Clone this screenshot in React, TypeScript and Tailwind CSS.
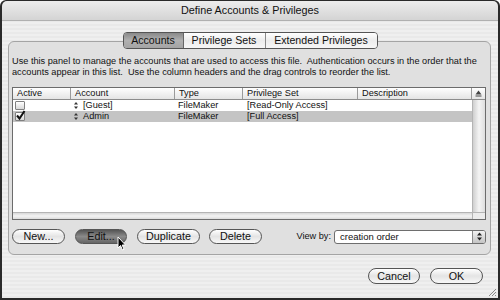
import React from "react";

type Column = {
    label: string;
    width: string;
};

const columns: Column[] = [
    { label: "Active", width: "w-[58px]" },
    { label: "Account", width: "w-[104px]" },
    { label: "Type", width: "w-[68px]" },
    { label: "Privilege Set", width: "w-[115px]" },
    { label: "Description", width: "w-[114px]" },
];

type Account = {
    active: boolean;
    name: string;
    type: string;
    privilegeSet: string;
    selected: boolean;
};

const accounts: Account[] = [
    { active: false, name: "[Guest]", type: "FileMaker", privilegeSet: "[Read-Only Access]", selected: false },
    { active: true, name: "Admin", type: "FileMaker", privilegeSet: "[Full Access]", selected: true },
];

const font = "font-['Liberation_Sans',Arial,sans-serif]";

function Checkbox({ checked }: { checked: boolean }) {
    return (
        <div className="relative w-[10px] h-[9px] border border-[#808080] rounded-[1px] bg-gradient-to-b from-[#ffffff] to-[#d8d8d8]">
            {checked && (
                <svg className="absolute -top-[3px] -left-[1px]" width="11" height="11" viewBox="0 0 11 11">
                    <path d="M2 5.5 L4.5 8.5 L9.5 1" stroke="#111" strokeWidth="2" fill="none" />
                </svg>
            )}
        </div>
    );
}

function DragHandle() {
    return (
        <svg width="4" height="7" viewBox="0 0 4 7" className="shrink-0">
            <path d="M2 0 L4 2.5 L0 2.5 Z" fill="#333" />
            <path d="M2 7 L4 4.5 L0 4.5 Z" fill="#333" />
        </svg>
    );
}

function PillButton({ label, width, pressed }: { label: string; width: string; pressed?: boolean }) {
    return (
        <div
            className={`${width} h-[15px] rounded-full border border-[#555] flex items-center justify-center text-[10.75px] text-[#111] ${
                pressed
                    ? "bg-gradient-to-b from-[#555555] via-[#8a8a8a] to-[#666666]"
                    : "bg-gradient-to-b from-[#ffffff] via-[#e4e4e4] to-[#f8f8f8]"
            }`}
        >
            {label}
        </div>
    );
}

function Cursor() {
    return (
        <svg className="absolute left-[42px] top-[7px]" width="10" height="15" viewBox="0 0 10 15">
            <path d="M1 1 L1 12 L3.5 9.5 L5.5 14 L7 13.3 L5.2 9 L8.5 9 Z" fill="#000" stroke="#fff" strokeWidth="1" />
        </svg>
    );
}

export default function App() {
    return (
        <div className={`${font} w-[500px] h-[300px] flex flex-col bg-[#2a2a2a] rounded-t-[6px] overflow-hidden pl-[2px] pr-[2px] pb-[2px] pt-[1px]`}>
            {/* Title bar */}
            <div className="h-[20px] shrink-0 flex items-center justify-center bg-gradient-to-b from-[#ededed] to-[#d4d4d4] border-b border-[#b0b0b0] rounded-t-[5px] text-[10.8px] text-[#111]">
                Define Accounts &amp; Privileges
            </div>

            {/* Body */}
            <div className="relative flex-1 flex flex-col bg-[repeating-linear-gradient(0deg,#e9e9e9_0px,#e9e9e9_2px,#efefef_2px,#efefef_4px)]">
                {/* Tabs */}
                <div className="relative z-10 flex justify-center mt-[11px] -mb-[8px]">
                    <div className="flex h-[17px] rounded-[4px] border border-[#555] overflow-hidden text-[10.6px] text-[#111]">
                        <div className="w-[60px] flex items-center justify-center bg-gradient-to-b from-[#8a8a8a] via-[#b0b0b0] to-[#a4a4a4] border-r border-[#666]">
                            Accounts
                        </div>
                        <div className="w-[82px] flex items-center justify-center bg-gradient-to-b from-[#ffffff] via-[#ececec] to-[#f6f6f6] border-r border-[#8a8a8a]">
                            Privilege Sets
                        </div>
                        <div className="w-[111px] flex items-center justify-center bg-gradient-to-b from-[#ffffff] via-[#ececec] to-[#f6f6f6]">
                            Extended Privileges
                        </div>
                    </div>
                </div>

                {/* Group panel */}
                <div className="ml-[6px] mr-[7px] h-[214px] rounded-[6px] border border-[#a4a4a4] bg-[#e0e0e0] pl-[3px] pr-[4px] pt-[14px] flex flex-col">
                    <p className="text-[9.2px] leading-[11px] text-[#111] whitespace-nowrap">
                        Use this panel to manage the accounts that are used to access this file.&nbsp; Authentication occurs in the order that the
                        <br />
                        accounts appear in this list.&nbsp; Use the column headers and the drag controls to reorder the list.
                    </p>

                    {/* Account list */}
                    <div className="mt-[9px] h-[133px] border border-[#6c6c6c] bg-white flex flex-col text-[9.2px] text-[#111]">
                        <div className="h-[12px] flex bg-gradient-to-b from-[#ffffff] to-[#e4e4e4] border-b border-[#8c8c8c]">
                            {columns.map((col) => (
                                <div key={col.label} className={`${col.width} border-r border-[#9a9a9a] pl-[4px] leading-[11px]`}>
                                    {col.label}
                                </div>
                            ))}
                            <div className="flex-1 flex items-center justify-center">
                                <svg width="7" height="7" viewBox="0 0 7 7">
                                    <path d="M3.5 0.5 L6.5 4.5 L0.5 4.5 Z" fill="#444" />
                                    <rect x="0.5" y="5.5" width="6" height="1" fill="#444" />
                                </svg>
                            </div>
                        </div>

                        <div className="flex-1 flex">
                            <div className="flex-1 flex flex-col">
                                {accounts.map((acc) => (
                                    <div key={acc.name} className={`h-[11px] flex items-center ${acc.selected ? "bg-[#c4c4c4]" : "bg-white"}`}>
                                        <div className="w-[58px] pl-[2px]">
                                            <Checkbox checked={acc.active} />
                                        </div>
                                        <div className="w-[104px] pl-[3px] flex items-center gap-[5px]">
                                            <DragHandle />
                                            <span>{acc.name}</span>
                                        </div>
                                        <div className="w-[68px] pl-[3px]">{acc.type}</div>
                                        <div className="w-[115px] pl-[4px]">{acc.privilegeSet}</div>
                                        <div className="w-[114px]"></div>
                                    </div>
                                ))}
                            </div>
                            <div className="w-[13px] border-l border-[#b4b4b4] bg-gradient-to-r from-[#cfcfcf] via-[#f4f4f4] to-[#dedede]"></div>
                        </div>

                        <div className="h-[7px] flex border-t border-[#b4b4b4]">
                            <div className="flex-1 bg-gradient-to-b from-[#d8d8d8] via-[#f4f4f4] to-[#dcdcdc]"></div>
                            <div className="w-[13px] border-l border-[#b4b4b4] bg-[#ececec]"></div>
                        </div>
                    </div>

                    {/* Action buttons */}
                    <div className="mt-[9px] flex items-center">
                        <PillButton label="New..." width="w-[53px]" />
                        <div className="relative ml-[10px]">
                            <PillButton label="Edit..." width="w-[52px]" pressed />
                            <Cursor />
                        </div>
                        <div className="ml-[10px]">
                            <PillButton label="Duplicate" width="w-[63px]" />
                        </div>
                        <div className="ml-[9px]">
                            <PillButton label="Delete" width="w-[53px]" />
                        </div>

                        <div className="ml-auto flex items-center">
                            <span className="text-[9.2px] text-[#111] mr-[3px]">View by:</span>
                            <div className="w-[152px] h-[14px] rounded-[3px] border border-[#6e6e6e] bg-white flex items-center overflow-hidden">
                                <span className="flex-1 pl-[5px] text-[9.5px] text-[#111] leading-[12px]">creation order</span>
                                <div className="w-[13px] h-full border-l border-[#8a8a8a] bg-gradient-to-b from-[#f2f2f2] to-[#c4c4c4] flex items-center justify-center">
                                    <svg width="5" height="9" viewBox="0 0 5 9">
                                        <path d="M2.5 0.5 L5 3.5 L0 3.5 Z" fill="#222" />
                                        <path d="M2.5 8.5 L5 5.5 L0 5.5 Z" fill="#222" />
                                    </svg>
                                </div>
                            </div>
                        </div>
                    </div>
                </div>

                {/* Dialog buttons */}
                <div className="mt-[13px] flex justify-end gap-[10px] mr-[15px]">
                    <div className="w-[52px] h-[16px] rounded-full border border-[#555] bg-gradient-to-b from-[#ffffff] via-[#e4e4e4] to-[#f8f8f8] flex items-center justify-center text-[10.75px] text-[#111]">
                        Cancel
                    </div>
                    <div className="w-[53px] h-[16px] rounded-full border border-[#555] bg-gradient-to-b from-[#ffffff] via-[#e4e4e4] to-[#f8f8f8] flex items-center justify-center text-[10.75px] text-[#111]">
                        OK
                    </div>
                </div>

                {/* Resize grip */}
                <svg className="absolute right-[1px] bottom-[1px]" width="10" height="10" viewBox="0 0 10 10">
                    <path d="M9 2 L2 9 M9 5 L5 9 M9 8 L8 9" stroke="#8a8a8a" strokeWidth="1" />
                </svg>
            </div>
        </div>
    );
}
